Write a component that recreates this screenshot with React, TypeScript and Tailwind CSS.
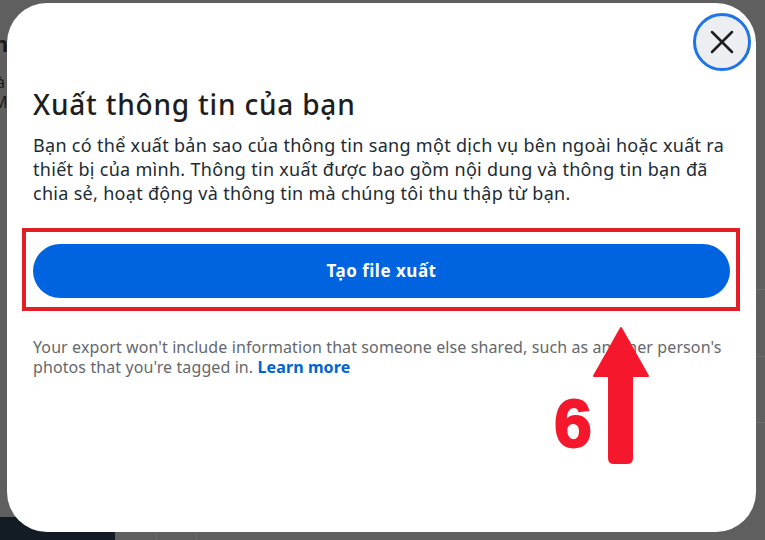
import { X } from 'lucide-react';

const font = { fontFamily: '"Noto Sans", "Open Sans", sans-serif' };

export default function App() {
  return (
    <div className="relative h-[540px] w-[765px] overflow-hidden bg-[#5f5f5f]" style={font}>
      {/* page behind the dialog */}
      <div className="flex h-full flex-col">
        <div className="flex flex-1">
          <div className="flex w-[12px] flex-col overflow-hidden pt-[30px] text-[#1a1a1a]">
            <span className="-ml-[6px] text-[22px] font-bold leading-[26px]">n</span>
            <span className="-ml-[4px] mt-[16px] text-[16px] leading-[20px]">à</span>
            <span className="-ml-[7px] text-[16px] leading-[20px]">M</span>
          </div>
          <div className="flex-1" />
          <div className="flex w-[9px] flex-col">
            <div className="h-[290px] border-b border-[#6c6c6c]" />
            <div className="h-[67px] border-b border-[#6c6c6c]" />
            <div className="h-[66px] border-b border-[#6c6c6c]" />
          </div>
        </div>
        <div className="flex h-[23px]">
          <div className="w-[115px] bg-[#131b24]" />
          <div className="w-[42px] border-r border-[#6a6a6a]" />
          <div className="w-[40px] border-r border-[#6a6a6a]" />
        </div>
      </div>

      {/* dialog */}
      <div className="absolute left-[7px] top-[3px] flex h-[529px] w-[749px] flex-col rounded-[40px] bg-white px-[26px]">
        <div className="-mr-[21px] flex justify-end pt-[10px]">
          <button className="flex h-[58px] w-[58px] items-center justify-center rounded-full border-[3px] border-[#1f74e6] bg-[#eceef1] text-[#1c1e21]">
            <X className="h-[40px] w-[40px]" strokeWidth={1.5} />
          </button>
        </div>
        <h1 className="mt-[16px] text-[28px] font-medium leading-[34px] tracking-[0.8px] text-[#1c1e21]">
          Xuất thông tin của bạn
        </h1>
        <p className="mt-[12px] text-[18px] leading-[24px] tracking-[0.3px] text-[#1c2b33]">
          Bạn có thể xuất bản sao của thông tin sang một dịch vụ bên ngoài hoặc xuất ra thiết bị của
          mình. Thông tin xuất được bao gồm nội dung và thông tin bạn đã chia sẻ, hoạt động và thông
          tin mà chúng tôi thu thập từ bạn.
        </p>
        <button className="mt-[39px] h-[54px] w-full rounded-full bg-[#0064e0] text-[17px] font-bold tracking-[0.5px] text-white">
          Tạo file xuất
        </button>
        <p className="mt-[39px] text-[16px] leading-[20px] tracking-[0.1px] text-[#65686c]">
          Your export won't include information that someone else shared, such as another person's
          photos that you're tagged in.{' '}
          <span className="font-bold text-[#0064d1]">Learn more</span>
        </p>
      </div>

      {/* annotation */}
      <div className="absolute left-[22px] top-[228px] h-[83px] w-[718px] border-[4px] border-[#e31e24]" />
      <svg className="absolute left-0 top-0" width="765" height="540" viewBox="0 0 765 540">
        <path
          d="M621 328 L648 376 L632 376 L632 458 Q632 463 627 463 L614 463 Q609 463 609 458 L609 376 L594 376 Z"
          fill="#f5182c"
          stroke="#f5182c"
          strokeWidth="2"
          strokeLinejoin="round"
        />
      </svg>
      <span
        className="absolute left-[554px] top-[389px] text-[68px] font-bold leading-[68px] text-[#f5182c] [-webkit-text-stroke:2px_#f5182c]"
        style={{ fontFamily: '"Liberation Sans", Arial, sans-serif' }}
      >
        6
      </span>
    </div>
  );
}
